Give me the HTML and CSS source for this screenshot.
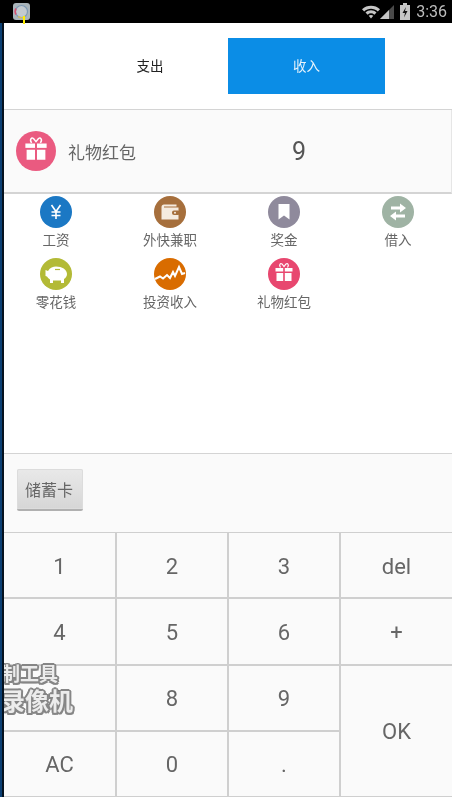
FILE: index.html
```html
<!DOCTYPE html>
<html lang="zh-CN">
<head>
<meta charset="utf-8">
<title>记账</title>
<link rel="stylesheet" href="styles.css">
</head>
<body>
<header class="status">
  <div class="app-icon">
    <svg width="17" height="17" viewBox="0 0 17 17"><rect width="17" height="17" rx="3" fill="#a9b4ba"/><circle cx="8.500" cy="8.500" r="6" fill="#c3cad0" stroke="#7d9ab5" stroke-width="1.200"/><path d="M3 5.500a6 6 0 0 0 0 6" fill="none" stroke="#d8506f" stroke-width="1.600"/><path d="M5 13.500a6 6 0 0 0 7 0" fill="none" stroke="#e0c050" stroke-width="1.200"/></svg>
  </div>
  <div class="status-right">
    <svg class="s-wifi" width="18" height="14" viewBox="0 0 18 14"><path d="M0 4.200C4.800-.4 13.200-.4 18 4.200L15.800 6.400C12 3 6 3 2.200 6.400Z" fill="#c6c6c6"/><path d="M3.500 7.600C6.500 4.600 11.500 4.600 14.500 7.600L12.400 9.700C10.300 7.900 7.700 7.900 5.600 9.700Z" fill="#c6c6c6"/><path d="M6.700 10.800C8 9.700 10 9.700 11.300 10.800L9 13.500Z" fill="#c6c6c6"/></svg>
    <svg class="s-signal" width="14" height="14" viewBox="0 0 14 14"><path d="M0 14 14 0V14Z" fill="#4a4a4a"/><path d="M0 14 9 5V14Z" fill="#c6c6c6"/></svg>
    <svg class="s-batt" width="10" height="17" viewBox="0 0 10 17"><path d="M3 0H7V2H10V17H0V2H3Z" fill="#c6c6c6"/><path d="M6 4 2.500 10H5L4 14.500 7.500 8H5Z" fill="#111"/></svg>
    <span class="clock">3:36</span>
  </div>
</header>
<div class="cursor-mark"></div>
<div class="shell">
  <div class="edge"></div>
  <main class="main">
    <div class="tabs">
      <button class="tab">支出</button>
      <button class="tab tab-on">收入</button>
    </div>
    <section class="entry">
      <div class="entry-left">
        <svg class="entry-icon" width="40" height="40" viewBox="0 0 32 32"><circle cx="16" cy="16" r="16" fill="#ea5a80"/><use href="#gift"/></svg>
        <span class="entry-name">礼物红包</span>
      </div>
      <span class="entry-value">9</span>
    </section>
    <section class="cats">
      <div class="cat">
        <svg width="32" height="32" viewBox="0 0 32 32"><circle cx="16" cy="16" r="16" fill="#1b78c4"/><path d="M11.500 9 16 15.500 20.500 9M16 15.500V23M11.500 16H20.500M11.500 19.500H20.500" fill="none" stroke="#fff" stroke-width="1.600"/></svg>
        <span>工资</span>
      </div>
      <div class="cat">
        <svg width="32" height="32" viewBox="0 0 32 32"><circle cx="16" cy="16" r="16" fill="#a66f3c"/><path d="M7.500 11C7.500 9.500 8.500 8.500 10 8.500H22.500V10.500H10V11.500H24.500V23.500H7.500Z" fill="#f5ebdf"/><rect x="18" y="14.500" width="8" height="4.500" rx="2" fill="#a66f3c"/><circle cx="21" cy="16.700" r="1" fill="#f5ebdf"/></svg>
        <span>外快兼职</span>
      </div>
      <div class="cat">
        <svg width="32" height="32" viewBox="0 0 32 32"><circle cx="16" cy="16" r="16" fill="#8f8a9c"/><path d="M10.500 8H21.500V23.500L16 19.500 10.500 23.500Z" fill="#fff"/></svg>
        <span>奖金</span>
      </div>
      <div class="cat">
        <svg width="32" height="32" viewBox="0 0 32 32"><circle cx="16" cy="16" r="16" fill="#9fb3a4"/><path d="M9 10.500H18V7.500L24 12 18 16.500V13.500H9ZM23 18.500H14V15.500L8 20 14 24.500V21.500H23Z" fill="#fff"/></svg>
        <span>借入</span>
      </div>
      <div class="cat">
        <svg width="32" height="32" viewBox="0 0 32 32"><circle cx="16" cy="16" r="16" fill="#b3ba36"/><path d="M5.500 12 8 13C10 9.500 13 8.500 16 8.500 22 8.500 27 11.500 27 16 27 18.500 25.500 20 24 21V25H21V22.500H13V25H10V21.500C8.500 20.500 7.500 19.500 7 18.500L5.500 18Z" fill="#fff"/><path d="M15 11.500H20" stroke="#b3ba36" stroke-width="1.200"/></svg>
        <span>零花钱</span>
      </div>
      <div class="cat">
        <svg width="32" height="32" viewBox="0 0 32 32"><circle cx="16" cy="16" r="16" fill="#d96c00"/><path d="M1 21 6 18.500 9 20.500 13 17 16 20 19 14 21 18 25 9 28 16 31 15" fill="none" stroke="#fff" stroke-width="2"/></svg>
        <span>投资收入</span>
      </div>
      <div class="cat">
        <svg width="32" height="32" viewBox="0 0 32 32"><circle cx="16" cy="16" r="16" fill="#e8476f"/><use href="#gift"/></svg>
        <span>礼物红包</span>
      </div>
    </section>
    <section class="account">
      <button class="account-btn">储蓄卡</button>
    </section>
    <section class="keys">
      <button class="key">1</button>
      <button class="key">2</button>
      <button class="key">3</button>
      <button class="key">del</button>
      <button class="key">4</button>
      <button class="key">5</button>
      <button class="key">6</button>
      <button class="key">+</button>
      <button class="key">7</button>
      <button class="key">8</button>
      <button class="key">9</button>
      <button class="key key-ok">OK</button>
      <button class="key">AC</button>
      <button class="key">0</button>
      <button class="key">.</button>
    </section>
  </main>
</div>
<div class="watermark">
  <div class="wm-one">制工具</div>
  <div class="wm-two">录像机</div>
</div>
<svg class="defs" width="0" height="0">
  <defs>
    <g id="gift" fill="#fff">
      <path d="M12.500 9.500C10.500 6.500 12.500 5 14 6L16 8.500 18 6C19.500 5 21.500 6.500 19.500 9.500" fill="none" stroke="#fff" stroke-width="1.200"/>
      <rect x="7.500" y="10" width="7.700" height="3.500"/>
      <rect x="16.800" y="10" width="7.700" height="3.500"/>
      <rect x="8.500" y="15" width="6.700" height="8"/>
      <rect x="16.800" y="15" width="6.700" height="8"/>
    </g>
  </defs>
</svg>
</body>
</html>
```
FILE: styles.css
```css
* { box-sizing: border-box; }
html, body { margin: 0; padding: 0; }
body {
  width: 452px;
  height: 797px;
  overflow: hidden;
  position: relative;
  background: #fff;
  font-family: Roboto, "Noto Sans CJK SC", sans-serif;
  color: #666;
  filter: blur(0.4px);
}
button {
  font: inherit;
  color: inherit;
  border: 0;
  padding: 0;
  background: none;
}
.defs { position: absolute; }
.status {
  height: 23px;
  background: #000;
  display: flex;
  align-items: center;
  justify-content: space-between;
  padding: 0 5px 0 13px;
}
.app-icon { height: 17px; }
.app-icon svg { display: block; }
.status-right { display: flex; align-items: center; }
.s-wifi { margin-right: 0; }
.s-signal { margin: 1px 6px 0 0; }
.s-batt { margin-right: 6px; }
.clock { font-size: 16px; color: #bdbdbd; line-height: 23px; }
.cursor-mark {
  position: absolute;
  left: 23px;
  top: 16px;
  width: 2px;
  height: 8px;
  background: #ffee00;
}
.shell { display: flex; height: 774px; }
.edge {
  width: 4px;
  flex: none;
  background: linear-gradient(90deg, #0b3f73 0 2px, #05121f 2px 4px);
}
.main {
  flex: 1;
  min-width: 0;
  position: relative;
  overflow: hidden;
  display: flex;
  flex-direction: column;
}
.tabs {
  height: 87px;
  flex: none;
  padding: 15px 0 0 68px;
  display: flex;
  align-items: flex-start;
  border-bottom: 1px solid #d4d4d4;
}
.tab {
  width: 156px;
  height: 56px;
  padding-bottom: 2px;
  font-size: 13.500px;
  color: #222;
}
.tab-on {
  width: 157px;
  background: #0b8de6;
  color: #e8f3fb;
}
.entry {
  height: 84px;
  flex: none;
  background: #fafafa;
  border-bottom: 2px solid #d4d4d4;
  border-right: 1px solid #e6e6e6;
  display: flex;
  align-items: center;
  padding: 0 0 0 12px;
}
.entry-left { display: flex; align-items: center; gap: 12px; width: 276px; }
.entry-icon { display: block; }
.entry-name { font-size: 17px; color: #666; }
.entry-value { font-size: 25px; color: #555; }
.cats {
  height: 259px;
  flex: none;
  margin-left: -5px;
  padding-top: 2px;
  display: grid;
  grid-template-columns: repeat(4, 114px);
  grid-auto-rows: 62px;
  align-content: start;
}
.cat {
  display: flex;
  flex-direction: column;
  align-items: center;
  font-size: 13.500px;
  line-height: 18px;
  color: #666;
}
.cat svg { display: block; margin-bottom: 3px; flex: none; }
.account {
  height: 79px;
  flex: none;
  background: #fafafa;
  border-top: 1px solid #d4d4d4;
  padding: 15px 0 0 13px;
}
.account-btn {
  width: 66px;
  height: 42px;
  padding-right: 2px;
  font-size: 16px;
  color: #666;
  background: linear-gradient(#e9e9e9, #d6d6d6);
  border-radius: 2px;
  border-bottom: 2px solid #b0b0b0;
  box-shadow: 0 0 0 1px #dcdcdc inset;
}
.keys {
  flex: 1;
  min-height: 0;
  background: #cfcfcf;
  padding: 1px 0;
  display: grid;
  grid-template-columns: 111px 110px 110px 111px;
  grid-template-rows: repeat(4, 1fr);
  gap: 2px;
}
.key {
  background: #fafafa;
  padding-top: 2px;
  font-size: 22px;
  color: #666;
}
.key-ok {
  grid-column: 4;
  grid-row: 3 / span 2;
}
.watermark {
  position: absolute;
  left: 4px;
  top: 663px;
  width: 90px;
  overflow: hidden;
  font-weight: 700;
  color: #ececec;
  text-shadow:
    2px 0 0 #868686, -2px 0 0 #868686, 0 2px 0 #868686, 0 -2px 0 #868686,
    1.500px 1.500px 0 #868686, -1.500px 1.500px 0 #868686,
    1.500px -1.500px 0 #868686, -1.500px -1.500px 0 #868686;
}
.wm-one { font-size: 19px; line-height: 24px; margin-left: -3px; }
.wm-two { font-size: 24px; line-height: 30px; margin-left: -3px; }
```
